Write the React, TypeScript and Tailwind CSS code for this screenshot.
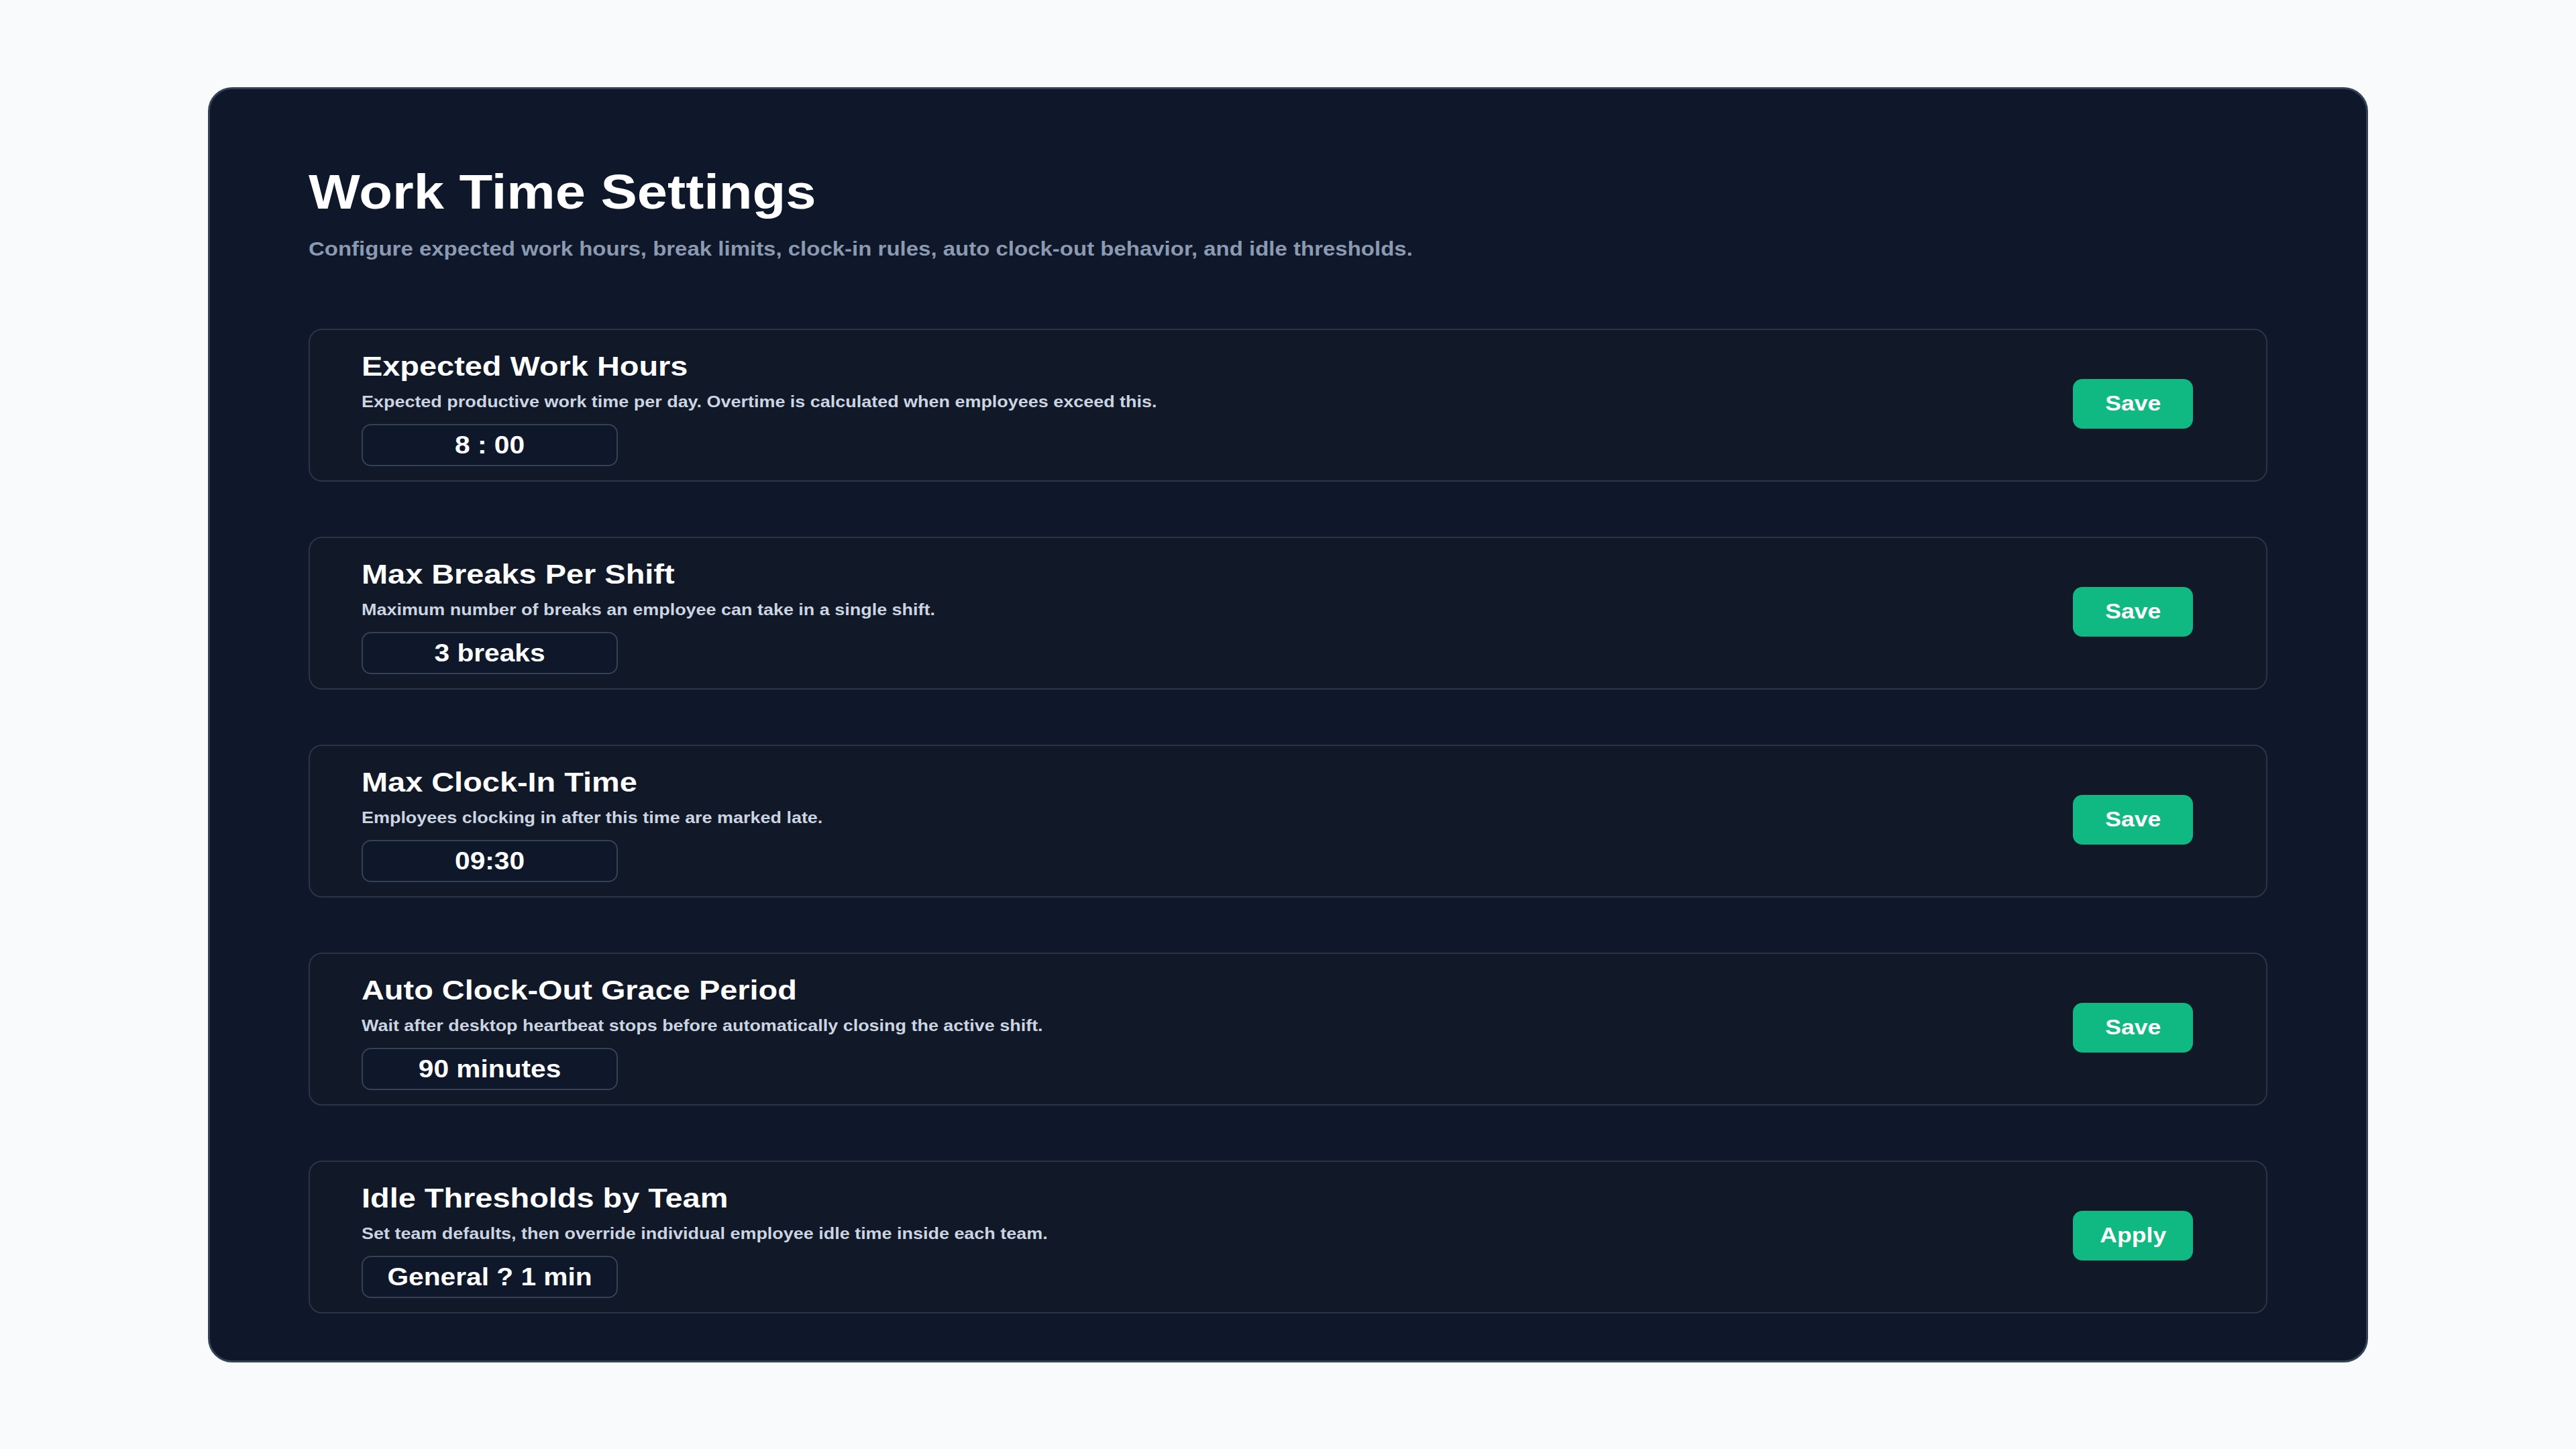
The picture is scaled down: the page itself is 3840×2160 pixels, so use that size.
import React from 'react';

type Setting = {
  title: string;
  description: string;
  value: string;
  action: string;
};

const settings: Setting[] = [
  {
    title: 'Expected Work Hours',
    description: 'Expected productive work time per day. Overtime is calculated when employees exceed this.',
    value: '8 : 00',
    action: 'Save',
  },
  {
    title: 'Max Breaks Per Shift',
    description: 'Maximum number of breaks an employee can take in a single shift.',
    value: '3 breaks',
    action: 'Save',
  },
  {
    title: 'Max Clock-In Time',
    description: 'Employees clocking in after this time are marked late.',
    value: '09:30',
    action: 'Save',
  },
  {
    title: 'Auto Clock-Out Grace Period',
    description: 'Wait after desktop heartbeat stops before automatically closing the active shift.',
    value: '90 minutes',
    action: 'Save',
  },
  {
    title: 'Idle Thresholds by Team',
    description: 'Set team defaults, then override individual employee idle time inside each team.',
    value: 'General ? 1 min',
    action: 'Apply',
  },
];

// the type in this design is drawn a little wide, so text gets a horizontal stretch
const wide = 'origin-left scale-x-[1.13]';

function SettingRow({ setting }: { setting: Setting }) {
  return (
    <div className="flex items-center justify-between rounded-[20px] border-2 border-[#2a3547] bg-[#111827] pt-[17px] pb-[21px] pl-[77px] pr-[109px]">
      <div className="flex flex-col">
        <h2 className={`${wide} text-[41.5px] leading-[74px] font-bold text-white`}>{setting.title}</h2>
        <p className={`${wide} mt-px text-[23.85px] leading-[30px] font-bold text-[#cbd5e1]`}>{setting.description}</p>
        <div className="mt-[18px] flex h-[63px] w-[382px] items-center justify-center rounded-[14px] border-2 border-[#334155] bg-[#0f172a] text-[36px] font-bold text-white">
          <span className="inline-block scale-x-[1.13]">{setting.value}</span>
        </div>
      </div>
      <button className="flex h-[74px] w-[179px] items-center justify-center rounded-[14px] bg-[#10b981] text-[31.5px] font-bold text-white">
        <span className="inline-block scale-x-[1.13]">{setting.action}</span>
      </button>
    </div>
  );
}

export default function App() {
  return (
    <div className="min-h-screen bg-[#f8fafc] pt-[130px] font-['Liberation_Sans',Arial,sans-serif]">
      <div className="mx-auto w-[3220px] rounded-[36px] border-[3px] border-[#334155] bg-[#0f172a] px-[147px] pt-[117px] pb-[70px]">
        <h1 className={`${wide} text-[72px] leading-[72px] font-bold text-white`}>Work Time Settings</h1>
        <p className={`${wide} mt-[31px] text-[29.2px] leading-[36px] font-bold text-[#8b9ab0]`}>
          Configure expected work hours, break limits, clock-in rules, auto clock-out behavior, and idle thresholds.
        </p>
        <div className="mt-[101px] flex flex-col gap-[82px]">
          {settings.map((s) => (
            <SettingRow key={s.title} setting={s} />
          ))}
        </div>
      </div>
    </div>
  );
}
